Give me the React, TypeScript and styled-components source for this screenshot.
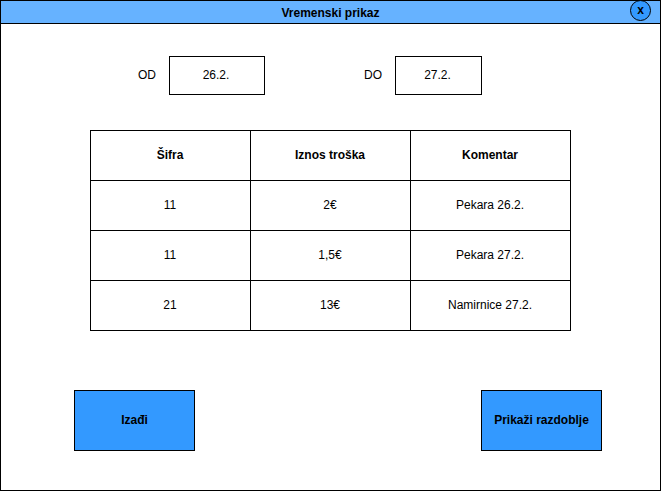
import React from "react";
import styled, { createGlobalStyle } from "styled-components";

const GlobalStyle = createGlobalStyle`
  *, *::before, *::after { box-sizing: border-box; }
  body {
    margin: 0;
    background: #fff;
    color: #000;
    font: 12px/14px "Liberation Sans", Arial, Helvetica, sans-serif;
  }
  button, input { font: inherit; color: inherit; }
`;

const Window = styled.div`
  display: flex;
  flex-direction: column;
  min-height: 100vh;
  border: 1px solid #000;
`;

const TitleBar = styled.header`
  display: grid;
  grid-template-columns: 1fr auto 1fr;
  align-items: center;
  height: 23px;
  padding: 0 9px;
  background: #66b2ff;
  border-bottom: 1px solid #000;
`;

const Title = styled.h1`
  grid-column: 2;
  margin: 0;
  padding-top: 2px;
  font-size: 12px;
  font-weight: bold;
`;

const CloseButton = styled.button`
  justify-self: end;
  align-self: start;
  display: flex;
  align-items: center;
  justify-content: center;
  width: 21px;
  height: 21px;
  margin-top: -1px;
  padding: 0 0 2px;
  border: 1px solid #000;
  border-radius: 50%;
  background: #3399ff;
  font-weight: bold;
  cursor: pointer;
`;

const Content = styled.main`
  flex: 1;
  display: flex;
  flex-direction: column;
`;

const Period = styled.form`
  display: flex;
  justify-content: space-between;
  padding: 32px 178px 0 137px;
`;

const Field = styled.label`
  display: flex;
  align-items: center;
  gap: 13px;
`;

const FieldName = styled.span`
  padding-bottom: 2px;
`;

const DateInput = styled.input<{ $width: number }>`
  width: ${(p) => p.$width}px;
  height: 39px;
  padding: 0 2px 2px 0;
  border: 1px solid #000;
  border-radius: 0;
  background: #fff;
  text-align: center;
`;

const TableArea = styled.section`
  padding: 35px 89px 0;
`;

const Table = styled.table`
  width: 100%;
  table-layout: fixed;
  border-collapse: collapse;
`;

const cell = `
  height: 50px;
  padding: 0 1px 2px 0;
  border: 1px solid #000;
  text-align: center;
  vertical-align: middle;
`;

const HeadCell = styled.th`${cell}`;
const Cell = styled.td`${cell}`;

const Actions = styled.footer`
  display: flex;
  justify-content: space-between;
  padding: 59px 58px 39px 73px;
`;

const ActionButton = styled.button`
  width: 121px;
  height: 61px;
  padding: 0 0 2px;
  border: 1px solid #000;
  background: #3399ff;
  font-weight: bold;
  cursor: pointer;
`;

const columns = ["Šifra", "Iznos troška", "Komentar"];

const expenses = [
  ["11", "2€", "Pekara 26.2."],
  ["11", "1,5€", "Pekara 27.2."],
  ["21", "13€", "Namirnice 27.2."],
];

export default function App() {
  return (
    <>
      <GlobalStyle />
      <Window>
        <TitleBar>
          <Title>Vremenski prikaz</Title>
          <CloseButton type="button">x</CloseButton>
        </TitleBar>
        <Content>
          <Period>
            <Field>
              <FieldName>OD</FieldName>
              <DateInput $width={96} defaultValue="26.2." />
            </Field>
            <Field>
              <FieldName>DO</FieldName>
              <DateInput $width={87} defaultValue="27.2." />
            </Field>
          </Period>
          <TableArea>
            <Table>
              <thead>
                <tr>
                  {columns.map((name) => (
                    <HeadCell key={name} scope="col">{name}</HeadCell>
                  ))}
                </tr>
              </thead>
              <tbody>
                {expenses.map((row) => (
                  <tr key={row[2]}>
                    {row.map((value, i) => (
                      <Cell key={columns[i]}>{value}</Cell>
                    ))}
                  </tr>
                ))}
              </tbody>
            </Table>
          </TableArea>
          <Actions>
            <ActionButton type="button">Izađi</ActionButton>
            <ActionButton type="button">Prikaži razdoblje</ActionButton>
          </Actions>
        </Content>
      </Window>
    </>
  );
}
